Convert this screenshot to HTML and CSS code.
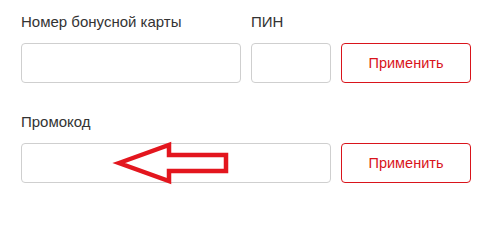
FILE: index.html
```html
<!DOCTYPE html>
<html lang="ru">
<head>
<meta charset="utf-8">
<link rel="stylesheet" href="styles.css">
</head>
<body>
<div class="form">
  <div class="row">
    <div class="field field-card">
      <label class="label">Номер бонусной карты</label>
      <div class="input"></div>
    </div>
    <div class="field field-pin">
      <label class="label">ПИН</label>
      <div class="input"></div>
    </div>
    <button class="btn">Применить</button>
  </div>
  <div class="row">
    <div class="field field-promo">
      <label class="label">Промокод</label>
      <div class="input"></div>
    </div>
    <button class="btn">Применить</button>
  </div>
  <svg class="arrow" width="490" height="200" viewBox="0 0 490 200">
    <polygon points="119,163 169,145 169,155 226,155 226,171 169,171 169,181" fill="none" stroke="#e3161e" stroke-width="4.5" stroke-linejoin="miter"/>
  </svg>
</div>
</body>
</html>
```

FILE: styles.css
```css
html, body {
  margin: 0;
  padding: 0;
  background: #fff;
}
body {
  font-family: "Liberation Sans", Arial, sans-serif;
  color: #333;
}
.form {
  position: relative;
  width: 490px;
  height: 200px;
  padding: 12px 0 0 21px;
  box-sizing: border-box;
  display: flex;
  flex-direction: column;
  gap: 29px;
}
.row {
  display: flex;
  align-items: flex-end;
  gap: 10px;
}
.field {
  display: flex;
  flex-direction: column;
}
.label {
  font-size: 15px;
  line-height: 20px;
  height: 20px;
  margin-bottom: 11px;
  white-space: nowrap;
}
.input {
  height: 40px;
  box-sizing: border-box;
  border: 1px solid #cfcfcf;
  border-radius: 4px;
  background: #fff;
}
.field-card { width: 220px; }
.field-pin { width: 80px; }
.field-promo { width: 310px; }
.btn {
  width: 130px;
  height: 40px;
  box-sizing: border-box;
  border: 1px solid #d9141b;
  border-radius: 4px;
  background: #fff;
  color: #d9141b;
  font-family: "Liberation Sans", Arial, sans-serif;
  font-size: 14.5px;
  padding: 0;
  margin: 0;
}
.arrow {
  position: absolute;
  left: 0;
  top: 0;
  pointer-events: none;
}
```
